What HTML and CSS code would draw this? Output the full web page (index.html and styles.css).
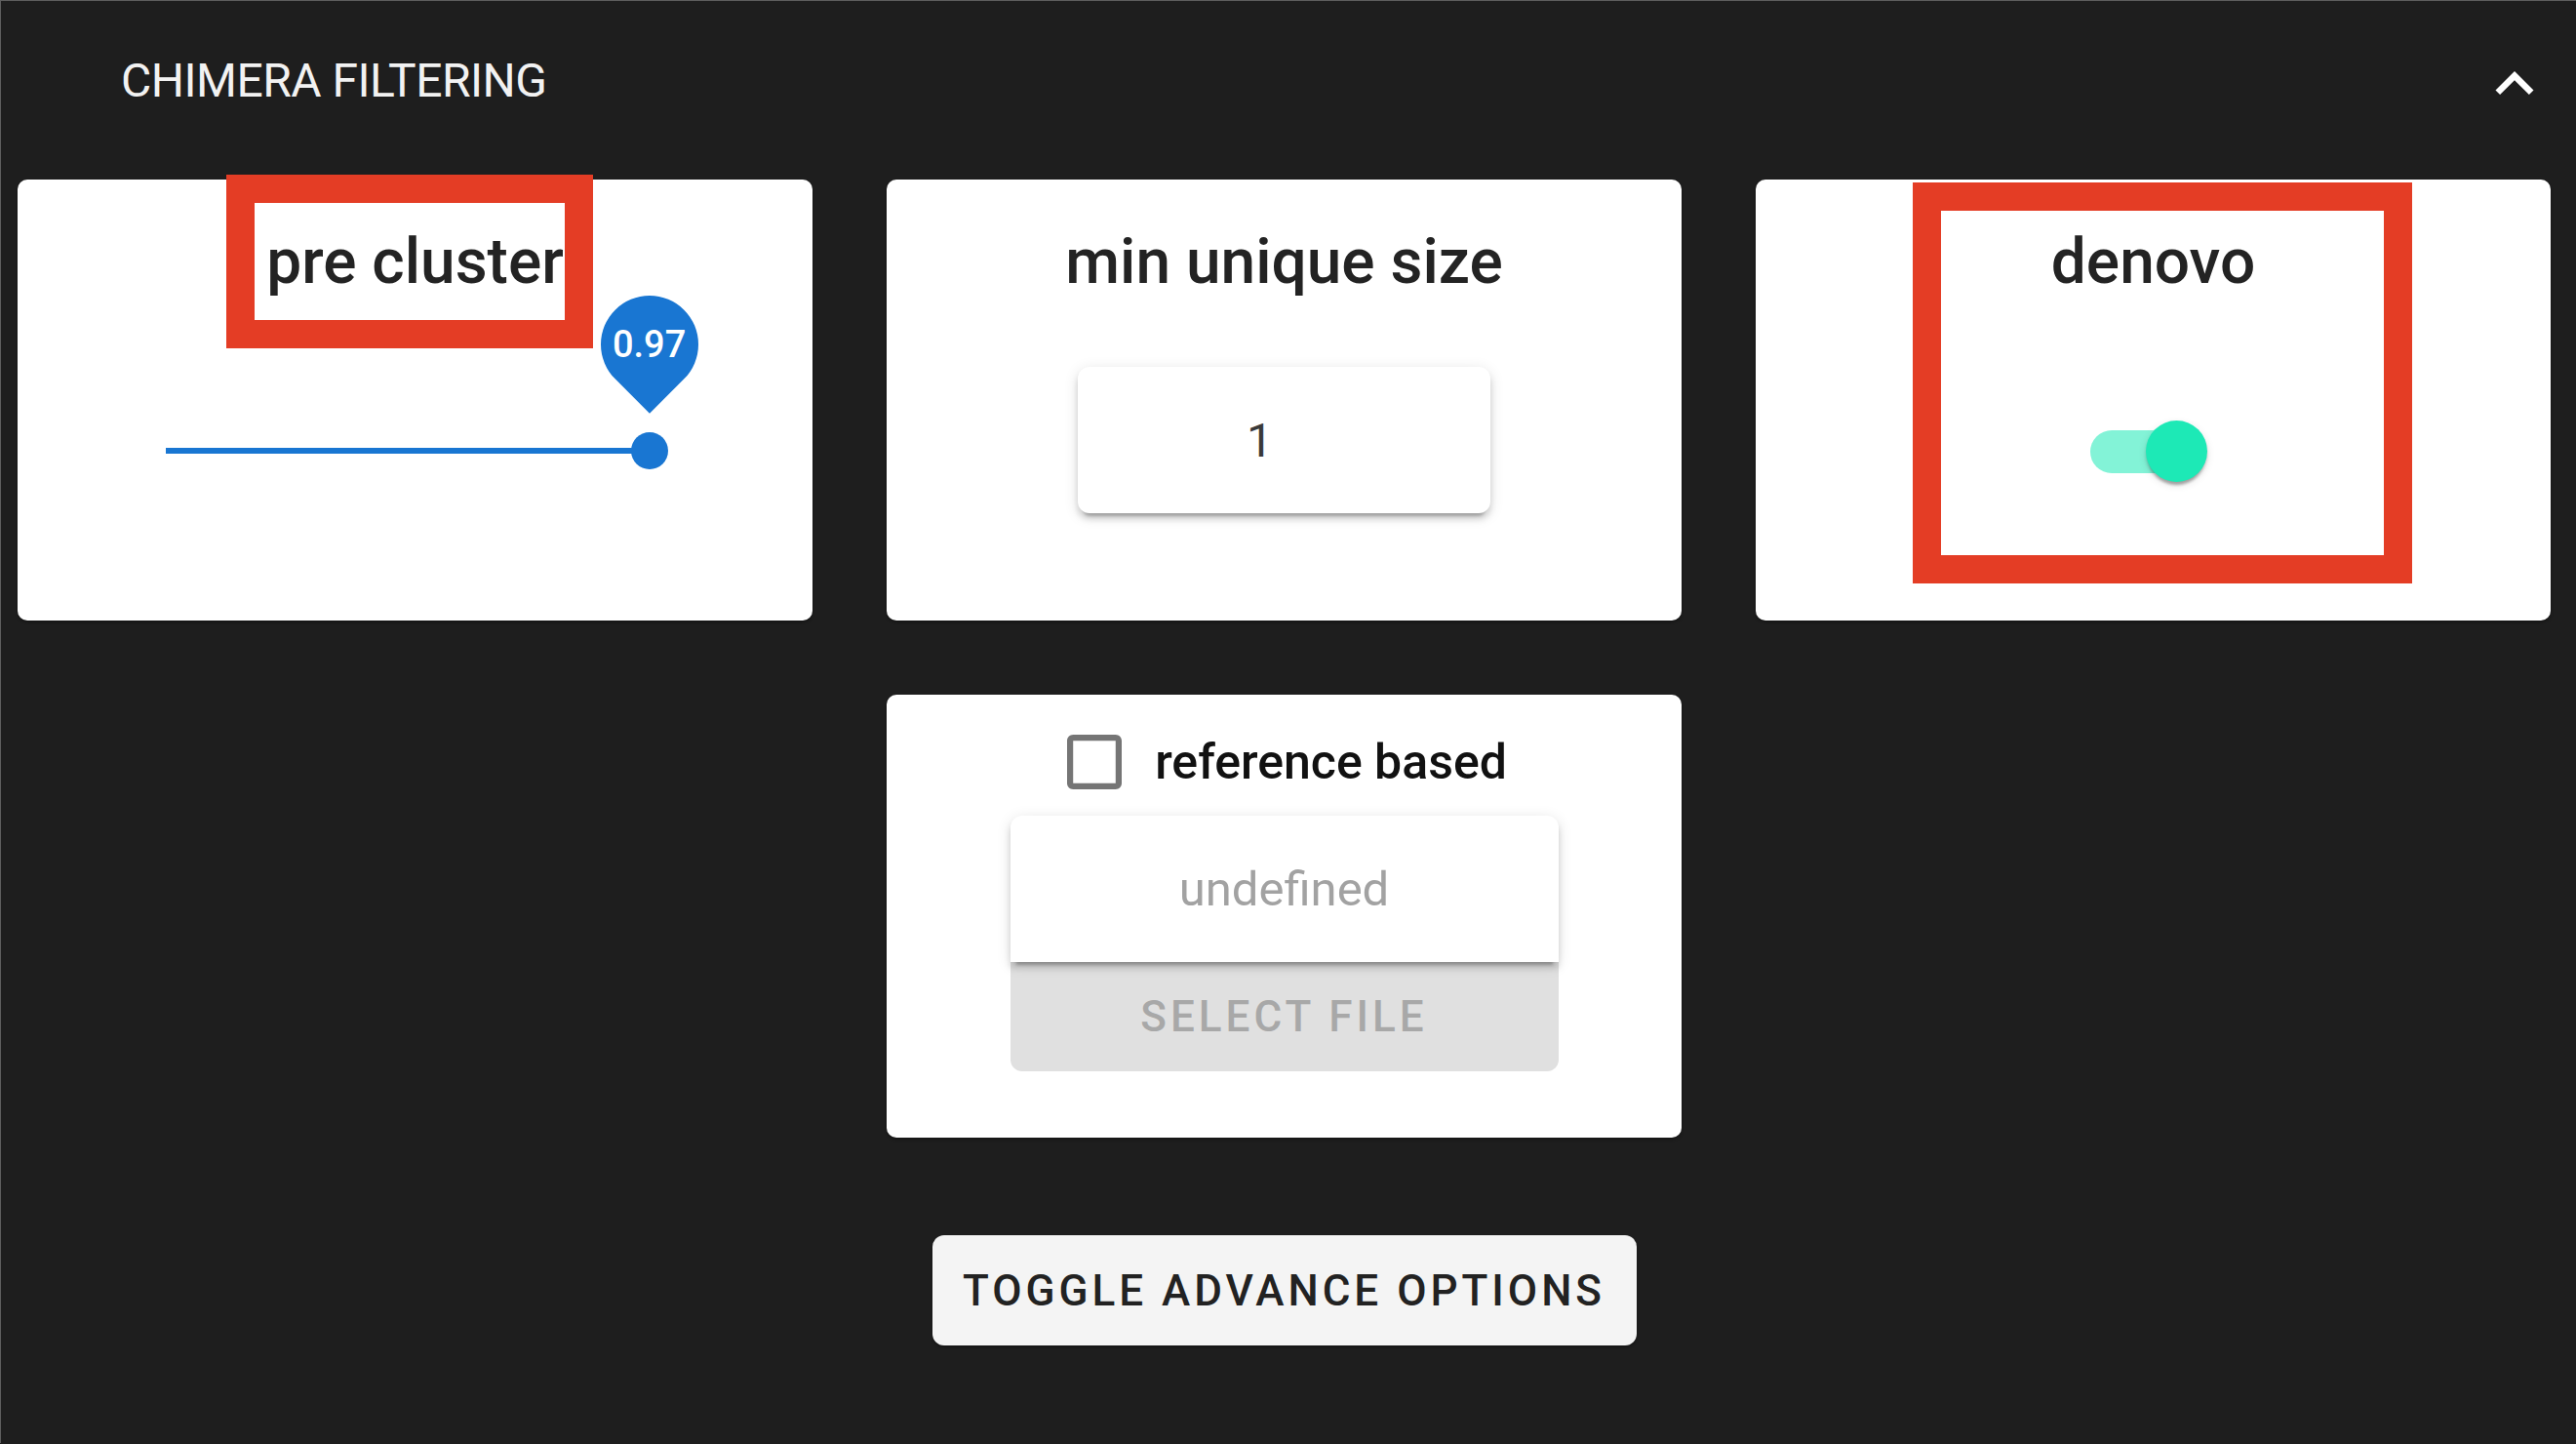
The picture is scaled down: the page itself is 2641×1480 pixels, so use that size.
FILE: index.html
```html
<!DOCTYPE html>
<html lang="en">
<head>
<meta charset="utf-8">
<title>Chimera filtering</title>
<link rel="stylesheet" href="styles.css">
</head>
<body>
<div class="panel">
  <header class="panel-header">
    <div class="panel-title">CHIMERA FILTERING</div>
    <svg class="expand-icon" viewBox="0 0 24 24"><path d="M12 8l-6 6 1.41 1.41L12 10.83l4.59 4.58L18 14z"/></svg>
  </header>

  <div class="grid">
    <section class="card">
      <div class="card-title">pre cluster</div>
      <div class="slider">
        <div class="rail"></div>
        <div class="track"></div>
        <div class="thumb">
          <div class="value-label"><span>0.97</span></div>
        </div>
      </div>
    </section>

    <section class="card">
      <div class="card-title">min unique size</div>
      <div class="number-box"><span>1</span></div>
    </section>

    <section class="card">
      <div class="card-title">denovo</div>
      <div class="switch">
        <div class="switch-track"></div>
        <div class="switch-thumb"></div>
      </div>
    </section>

    <section class="card card-ref">
      <div class="check-row">
        <svg class="checkbox" viewBox="3 3 18 18"><path d="M19 5v14H5V5h14m0-2H5c-1.11 0-2 .9-2 2v14c0 1.1.89 2 2 2h14c1.1 0 2-.9 2-2V5c0-1.1-.9-2-2-2z"/></svg>
        <span class="check-label">reference based</span>
      </div>
      <div class="file-box"><span>undefined</span></div>
      <div class="select-file">SELECT FILE</div>
    </section>

    <div class="toggle-btn">TOGGLE ADVANCE OPTIONS</div>
  </div>
</div>

<div class="mark mark-1"></div>
<div class="mark mark-2"></div>
</body>
</html>
```

FILE: styles.css
```css
html, body {
  margin: 0;
  padding: 0;
}

body {
  width: 2641px;
  height: 1480px;
  overflow: hidden;
  background: #1e1e1e;
  font-family: Roboto, "Noto Sans", "Liberation Sans", sans-serif;
  position: relative;
}

.panel {
  border-top: 1px solid #5e5e5e;
  border-left: 1px solid #5e5e5e;
  height: 1479px;
  box-sizing: border-box;
}

.panel-header {
  display: flex;
  justify-content: space-between;
  align-items: flex-start;
  height: 183px;
}

.panel-title {
  margin: 54px 0 0 123px;
  font-size: 48px;
  line-height: 56px;
  font-weight: 400;
  letter-spacing: -0.5px;
  color: #f2f2f2;
}

.expand-icon {
  width: 78px;
  height: 78px;
  margin: 46px 24px 0 0;
  fill: #ffffff;
}

.grid {
  display: grid;
  grid-template-columns: repeat(3, 815px);
  column-gap: 76px;
  row-gap: 76px;
  padding-left: 17px;
  align-items: start;
}

.card {
  background: #ffffff;
  border-radius: 10px;
  height: 452px;
  display: flex;
  flex-direction: column;
  align-items: center;
  box-shadow: 0 2px 3px rgba(0, 0, 0, 0.3);
}

.card-title {
  margin-top: 53px;
  font-size: 64px;
  line-height: 64px;
  font-weight: 500;
  color: #232323;
}

/* slider */
.slider {
  position: relative;
  width: 511px;
  height: 6px;
  margin-top: 158px;
}

.rail {
  position: absolute;
  inset: 0;
  background: #1976d2;
  opacity: 0.38;
  border-radius: 3px;
}

.track {
  position: absolute;
  left: 0;
  top: 0;
  bottom: 0;
  width: 97%;
  background: #1976d2;
}

.thumb {
  position: absolute;
  left: 97%;
  top: 50%;
  width: 38px;
  height: 38px;
  margin: -19px 0 0 -19px;
  border-radius: 50%;
  background: #1976d2;
}

.value-label {
  position: absolute;
  left: -31px;
  top: -140px;
  width: 100px;
  height: 100px;
  display: flex;
  align-items: center;
  justify-content: center;
}

.value-label::before {
  content: "";
  position: absolute;
  inset: 0;
  background: #1976d2;
  border-radius: 50% 50% 50% 0;
  transform: rotate(-45deg);
}

.value-label span {
  position: relative;
  color: #ffffff;
  font-size: 38px;
  font-weight: 500;
  line-height: 1;
}

/* number input */
.number-box {
  margin-top: 75px;
  width: 423px;
  height: 150px;
  border-radius: 12px;
  background: #ffffff;
  box-shadow: 0 9px 3px -6px rgba(0, 0, 0, 0.2), 0 6px 6px rgba(0, 0, 0, 0.14), 0 3px 15px rgba(0, 0, 0, 0.12);
  display: flex;
  align-items: center;
  justify-content: center;
  padding-right: 50px;
  box-sizing: border-box;
  font-size: 48px;
  color: #3a3a3a;
}

/* switch */
.switch {
  position: relative;
  width: 186px;
  height: 122px;
  margin: 101px 19px 0 0;
}

.switch-track {
  position: absolute;
  left: 38px;
  top: 39px;
  width: 109px;
  height: 44px;
  border-radius: 22px;
  background: #1de9b6;
  opacity: 0.55;
}

.switch-thumb {
  position: absolute;
  left: 95px;
  top: 29px;
  width: 63px;
  height: 63px;
  border-radius: 50%;
  background: #1de9b6;
  box-shadow: 0 6px 3px -3px rgba(0, 0, 0, 0.2), 0 3px 3px rgba(0, 0, 0, 0.14), 0 3px 9px rgba(0, 0, 0, 0.12);
}

/* reference based card */
.card-ref {
  grid-column: 2;
  height: 454px;
}

.check-row {
  margin-top: 41px;
  height: 56px;
  display: flex;
  align-items: center;
  gap: 34px;
  padding-left: 6px;
}

.checkbox {
  width: 56px;
  height: 56px;
  fill: #757575;
}

.check-label {
  font-size: 50px;
  font-weight: 500;
  color: #111111;
}

.file-box {
  margin-top: 27px;
  width: 562px;
  height: 150px;
  border-radius: 12px 12px 0 0;
  background: #ffffff;
  box-shadow: 0 9px 3px -6px rgba(0, 0, 0, 0.2), 0 6px 6px rgba(0, 0, 0, 0.14), 0 3px 15px rgba(0, 0, 0, 0.12);
  display: flex;
  align-items: center;
  justify-content: center;
  font-size: 49px;
  color: #a2a2a2;
  position: relative;
  z-index: 1;
}

.select-file {
  width: 562px;
  height: 112px;
  border-radius: 0 0 12px 12px;
  background: #e0e0e0;
  display: flex;
  align-items: center;
  justify-content: center;
  font-size: 44px;
  font-weight: 500;
  letter-spacing: 4px;
  color: #a8a8a8;
}

.toggle-btn {
  grid-column: 2;
  justify-self: center;
  margin-top: 24px;
  width: 722px;
  height: 113px;
  border-radius: 12px;
  background: #f4f4f4;
  display: flex;
  align-items: center;
  justify-content: center;
  font-size: 44px;
  font-weight: 500;
  letter-spacing: 4px;
  color: #222222;
  box-shadow: 0 2px 3px rgba(0, 0, 0, 0.3);
}

/* red annotation boxes drawn over the screenshot */
.mark {
  position: absolute;
  border: 29px solid #e43d25;
  box-sizing: border-box;
}

.mark-1 {
  left: 232px;
  top: 179px;
  width: 376px;
  height: 178px;
}

.mark-2 {
  left: 1961px;
  top: 187px;
  width: 512px;
  height: 411px;
}
```
